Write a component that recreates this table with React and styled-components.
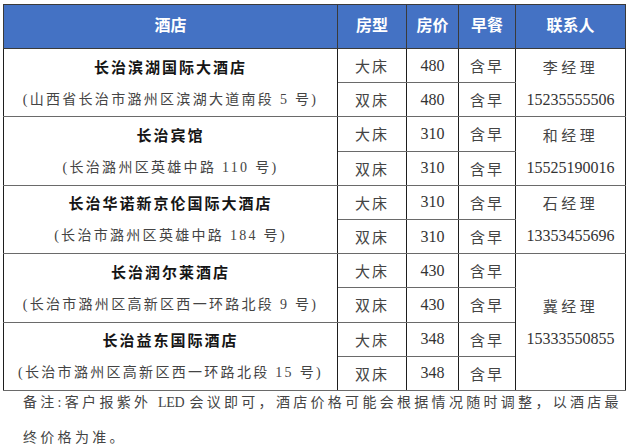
import React from "react";
import styled, { createGlobalStyle } from "styled-components";

const GlobalStyle = createGlobalStyle`
  html, body { margin: 0; padding: 0; background: #fff; }
  body { font-family: "Liberation Serif", "Noto Sans CJK SC", serif; }
`;

const Page = styled.div`
  width: 630px;
  height: 447px;
  padding: 4px 0 0 3px;
  box-sizing: border-box;
  overflow: hidden;
`;

const Table = styled.table`
  width: 622px;
  border-collapse: collapse;
  table-layout: fixed;
  border: 1px solid #6e6e6e;
`;

const Th = styled.th`
  height: 37px;
  padding: 0 0 6px;
  background: #4472c4;
  color: #fff;
  font-family: "Noto Sans CJK SC", sans-serif;
  font-weight: 700;
  font-size: 16px;
  text-align: center;
  border: 1px solid #3a3a3a;
`;

const Td = styled.td`
  height: 33.2px;
  padding: 0;
  text-align: center;
  vertical-align: middle;
  border-top: 1px solid #6a6a6a;
  border-bottom: 1px solid #6a6a6a;
  border-left: 1px solid #1e1e1e;
  border-right: 1px solid #1e1e1e;
  color: #3a3a3a;
`;

const Line = styled.div`
  height: 33px;
  line-height: 33px;
  white-space: nowrap;
`;

const HotelName = styled(Line)`
  font-family: "Noto Sans CJK SC", sans-serif;
  font-weight: 700;
  font-size: 15px;
  letter-spacing: 2px;
  color: #151515;
`;

const Address = styled(Line)`
  font-family: "Liberation Serif", "Noto Sans CJK SC", serif;
  font-size: 14px;
  letter-spacing: 2.3px;
  color: #444;
`;

const Cjk = styled.span`
  font-family: "Noto Sans CJK SC", sans-serif;
  font-size: ${(p) => p.$size || 15}px;
  letter-spacing: ${(p) => p.$ls || 2}px;
  font-weight: 400;
  color: #444;
`;

const Num = styled.span`
  font-family: "Liberation Serif", serif;
  font-size: 16px;
  color: #333;
`;

const Footer = styled.div`
  display: flex;
  flex-direction: column;
  gap: 11px;
  padding-left: 20px;
  font-family: "Liberation Serif", "Noto Sans CJK SC", serif;
  font-size: 14px;
  letter-spacing: 3.3px;
  color: #444;
`;

const FootLine = styled.div`
  height: 24px;
  line-height: 24px;
  white-space: nowrap;
`;

const Latin = styled.span`
  font-family: "Liberation Serif", serif;
  font-size: 14px;
  letter-spacing: -0.3px;
  margin: 0 5px 0 0;
`;

const hotels = [
  {
    name: "长治滨湖国际大酒店",
    addr: "(山西省长治市潞州区滨湖大道南段 5 号)",
    price: "480",
    contact: { name: "李经理", phone: "15235555506", span: 1 },
  },
  {
    name: "长治宾馆",
    addr: "(长治潞州区英雄中路 110 号)",
    price: "310",
    contact: { name: "和经理", phone: "15525190016", span: 1 },
  },
  {
    name: "长治华诺新京伦国际大酒店",
    addr: "(长治市潞州区英雄中路 184 号)",
    price: "310",
    contact: { name: "石经理", phone: "13353455696", span: 1 },
  },
  {
    name: "长治润尔莱酒店",
    addr: "(长治市潞州区高新区西一环路北段 9 号)",
    price: "430",
    contact: { name: "冀经理", phone: "15333550855", span: 2 },
  },
  {
    name: "长治益东国际酒店",
    addr: "(长治市潞州区高新区西一环路北段 15 号)",
    price: "348",
    contact: null,
  },
];

function RoomCells({ type, price }) {
  return (
    <>
      <Td><Cjk>{type}</Cjk></Td>
      <Td><Num>{price}</Num></Td>
      <Td><Cjk>含早</Cjk></Td>
    </>
  );
}

export default function App() {
  return (
    <>
      <GlobalStyle />
      <Page>
        <Table>
          <colgroup>
            <col style={{ width: 334 }} />
            <col style={{ width: 69 }} />
            <col style={{ width: 52 }} />
            <col style={{ width: 57 }} />
            <col style={{ width: 110 }} />
          </colgroup>
          <thead>
            <tr>
              <Th>酒店</Th>
              <Th>房型</Th>
              <Th>房价</Th>
              <Th>早餐</Th>
              <Th>联系人</Th>
            </tr>
          </thead>
          <tbody>
            {hotels.map((h) => (
              <React.Fragment key={h.name}>
                <tr>
                  <Td rowSpan={2}>
                    <HotelName>{h.name}</HotelName>
                    <Address>{h.addr}</Address>
                  </Td>
                  <RoomCells type="大床" price={h.price} />
                  {h.contact && (
                    <Td rowSpan={h.contact.span * 2}>
                      <Line><Cjk $ls={3.5}>{h.contact.name}</Cjk></Line>
                      <Line><Num>{h.contact.phone}</Num></Line>
                    </Td>
                  )}
                </tr>
                <tr>
                  <RoomCells type="双床" price={h.price} />
                </tr>
              </React.Fragment>
            ))}
          </tbody>
        </Table>
        <Footer>
          <FootLine>
            备注:客户报紫外 <Latin>LED</Latin>会议即可，酒店价格可能会根据情况随时调整，以酒店最
          </FootLine>
          <FootLine>终价格为准。</FootLine>
        </Footer>
      </Page>
    </>
  );
}
